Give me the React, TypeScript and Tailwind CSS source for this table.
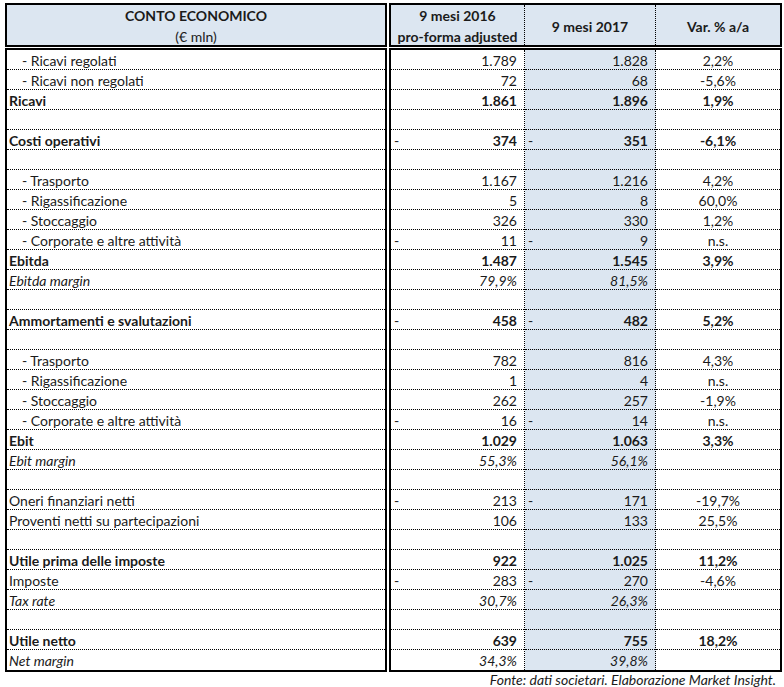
type Row = {
  label?: string;
  indent?: boolean;
  bold?: boolean;
  italic?: boolean;
  a?: string;
  aNeg?: boolean;
  b?: string;
  bNeg?: boolean;
  v?: string;
};

const ROWS: Row[] = [
  { label: "- Ricavi regolati", indent: true, a: "1.789", b: "1.828", v: "2,2%" },
  { label: "- Ricavi non regolati", indent: true, a: "72", b: "68", v: "-5,6%" },
  { label: "Ricavi", bold: true, a: "1.861", b: "1.896", v: "1,9%" },
  {},
  { label: "Costi operativi", bold: true, a: "374", aNeg: true, b: "351", bNeg: true, v: "-6,1%" },
  {},
  { label: "- Trasporto", indent: true, a: "1.167", b: "1.216", v: "4,2%" },
  { label: "- Rigassificazione", indent: true, a: "5", b: "8", v: "60,0%" },
  { label: "- Stoccaggio", indent: true, a: "326", b: "330", v: "1,2%" },
  { label: "- Corporate e altre attività", indent: true, a: "11", aNeg: true, b: "9", bNeg: true, v: "n.s." },
  { label: "Ebitda", bold: true, a: "1.487", b: "1.545", v: "3,9%" },
  { label: "Ebitda margin", italic: true, a: "79,9%", b: "81,5%" },
  {},
  { label: "Ammortamenti e svalutazioni", bold: true, a: "458", aNeg: true, b: "482", bNeg: true, v: "5,2%" },
  {},
  { label: "- Trasporto", indent: true, a: "782", b: "816", v: "4,3%" },
  { label: "- Rigassificazione", indent: true, a: "1", b: "4", v: "n.s." },
  { label: "- Stoccaggio", indent: true, a: "262", b: "257", v: "-1,9%" },
  { label: "- Corporate e altre attività", indent: true, a: "16", aNeg: true, b: "14", bNeg: true, v: "n.s." },
  { label: "Ebit", bold: true, a: "1.029", b: "1.063", v: "3,3%" },
  { label: "Ebit margin", italic: true, a: "55,3%", b: "56,1%" },
  {},
  { label: "Oneri finanziari netti", a: "213", aNeg: true, b: "171", bNeg: true, v: "-19,7%" },
  { label: "Proventi netti su partecipazioni", a: "106", b: "133", v: "25,5%" },
  {},
  { label: "Utile prima delle imposte", bold: true, a: "922", b: "1.025", v: "11,2%" },
  { label: "Imposte", a: "283", aNeg: true, b: "270", bNeg: true, v: "-4,6%" },
  { label: "Tax rate", italic: true, a: "30,7%", b: "26,3%" },
  {},
  { label: "Utile netto", bold: true, a: "639", b: "755", v: "18,2%" },
  { label: "Net margin", italic: true, a: "34,3%", b: "39,8%" },
];

const FONT = "font-['Lato',sans-serif]";

function styleOf(r: Row) {
  if (r.bold) return "font-bold";
  if (r.italic) return "italic";
  return "";
}

export default function App() {
  const last = ROWS.length - 1;
  return (
    <div className={`w-[784px] h-[687px] bg-white pl-[5px] pt-[3px] text-[14px] text-[#1b1b1b] ${FONT}`}>
      {/* header */}
      <div className="flex gap-[2px]">
        <div className="w-[382px] h-[44px] border-2 border-black bg-[#dce6f1] flex flex-col items-center justify-center pt-[2px] font-bold leading-[21px]">
          <span>CONTO ECONOMICO</span>
          <span className="font-normal">(€ mln)</span>
        </div>
        <div className="w-[393px] h-[44px] border-2 border-black bg-[#dce6f1] flex font-bold leading-[21px]">
          <div className="w-[134px] border-r border-dotted border-black flex flex-col items-center justify-center pt-[2px]">
            <span>9 mesi 2016</span>
            <span>pro-forma adjusted</span>
          </div>
          <div className="w-[131px] border-r border-dotted border-black flex items-center justify-center pt-[2px]">
            9 mesi 2017
          </div>
          <div className="flex-1 flex items-center justify-center pt-[2px]">Var. % a/a</div>
        </div>
      </div>

      {/* body */}
      <div className="flex gap-[2px] mt-px">
        <div className="w-[382px] border-2 border-black">
          {ROWS.map((r, i) => (
            <div
              key={i}
              className={`h-[20px] flex items-center pt-[2px] leading-none ${i === last ? "" : "border-b border-dotted border-black"} ${
                r.indent ? "pl-[15px]" : "pl-[2px]"
              } ${styleOf(r)}`}
            >
              {r.label}
            </div>
          ))}
        </div>
        <div className="w-[393px] border-2 border-black flex">
          <div className="w-[134px] border-r border-dotted border-black">
            {ROWS.map((r, i) => (
              <div
                key={i}
                className={`h-[20px] flex items-center justify-between pt-[2px] pl-[3px] pr-[7px] leading-none ${i === last ? "" : "border-b border-dotted border-black"} ${styleOf(r)}`}
              >
                <span className="font-normal">{r.aNeg ? "-" : ""}</span>
                <span>{r.a}</span>
              </div>
            ))}
          </div>
          <div className="w-[131px] border-r border-dotted border-black bg-[#dce6f1]">
            {ROWS.map((r, i) => (
              <div
                key={i}
                className={`h-[20px] flex items-center justify-between pt-[2px] pl-[3px] pr-[7px] leading-none ${i === last ? "" : "border-b border-dotted border-black"} ${styleOf(r)}`}
              >
                <span className="font-normal">{r.bNeg ? "-" : ""}</span>
                <span>{r.b}</span>
              </div>
            ))}
          </div>
          <div className="flex-1">
            {ROWS.map((r, i) => (
              <div
                key={i}
                className={`h-[20px] flex items-center justify-center pt-[2px] leading-none ${i === last ? "" : "border-b border-dotted border-black"} ${r.bold ? "font-bold" : ""}`}
              >
                {r.v}
              </div>
            ))}
          </div>
        </div>
      </div>

      <div className="pr-[8px] pt-[1px] text-right italic leading-[14px]">
        Fonte: dati societari. Elaborazione Market Insight.
      </div>
    </div>
  );
}
